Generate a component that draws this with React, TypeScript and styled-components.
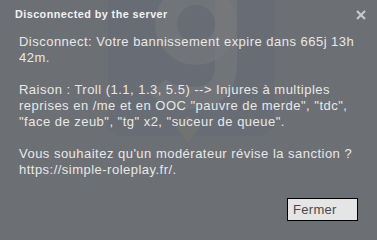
import {FC} from "react";
import styled, {createGlobalStyle} from "styled-components";

const GlobalStyle = createGlobalStyle`
  html, body {
    margin: 0;
    padding: 0;
    background: #6c6f74;
  }
`

const StyledDialog = styled.div`
  position: relative;
  width: 377px;
  height: 235px;
  background: #6c6f74;
  overflow: hidden;
  box-sizing: border-box;
  padding: 8px 11px 0 15px;
  display: flex;
  flex-direction: column;
`
const StyledWatermark = styled.svg`
  position: absolute;
  left: 108px;
  top: -34px;
  width: 166px;
  height: 190px;
  pointer-events: none;
`
const StyledHeader = styled.div`
  position: relative;
  display: flex;
  align-items: center;
  justify-content: space-between;
  height: 11px;
`
const StyledTitle = styled.div`
  font-family: "Liberation Sans", sans-serif;
  font-weight: bold;
  font-size: 10.8px;
  color: #f2f2f2;
  letter-spacing: 0.45px;
`
const StyledClose = styled.svg`
  width: 10px;
  height: 10px;
  margin-top: 3px;
`
const StyledBody = styled.div`
  position: relative;
  margin: 15px 0 0 4px;
  width: 340px;
  font-family: "Liberation Sans", sans-serif;
  font-size: 13px;
  letter-spacing: 0.48px;
  line-height: 16px;
  color: #e8e8e8;
  white-space: pre-line;
`
const StyledFooter = styled.div`
  position: relative;
  display: flex;
  justify-content: flex-end;
  margin-top: auto;
  margin-right: 8px;
  margin-bottom: 14px;
`
const StyledButton = styled.button`
  width: 71px;
  height: 23px;
  background: #e5e5e5;
  border: 1px solid #000;
  border-radius: 0;
  padding: 0 0 0 5px;
  text-align: left;
  font-family: "Liberation Sans", sans-serif;
  font-size: 13px;
  letter-spacing: 0.3px;
  color: #4a4a4a;
  cursor: pointer;
`

const message = `Disconnect: Votre bannissement expire dans 665j 13h
42m.

Raison : Troll (1.1, 1.3, 5.5) --> Injures à multiples
reprises en /me et en OOC "pauvre de merde", "tdc",
"face de zeub", "tg" x2, "suceur de queue".

Vous souhaitez qu'un modérateur révise la sanction ?
https://simple-roleplay.fr/.`

const App: FC = () => {
    return (
        <>
            <GlobalStyle/>
            <StyledDialog>
                <StyledWatermark viewBox="0 0 166 190">
                    <rect x="0" y="0" width="166" height="170" rx="14" fill="#646b78" opacity="0.4"/>
                    <circle cx="88" cy="58" r="30" fill="none" stroke="#78797b" strokeWidth="22" opacity="0.6"/>
                    <path d="M118 30 V98 Q118 132 84 132 Q60 132 50 120" fill="none" stroke="#78797b" strokeWidth="22" opacity="0.6"/>
                    <path d="M80 150 L92 162 L80 176 L68 162 Z" fill="#7c7a6c" opacity="0.45"/>
                </StyledWatermark>
                <StyledHeader>
                    <StyledTitle>Disconnected by the server</StyledTitle>
                    <StyledClose viewBox="0 0 10 10">
                        <path d="M1 1 L9 9 M9 1 L1 9" stroke="#c9c9c9" strokeWidth="2.2"/>
                    </StyledClose>
                </StyledHeader>
                <StyledBody>{message}</StyledBody>
                <StyledFooter>
                    <StyledButton>Fermer</StyledButton>
                </StyledFooter>
            </StyledDialog>
        </>
    )
}

export default App
